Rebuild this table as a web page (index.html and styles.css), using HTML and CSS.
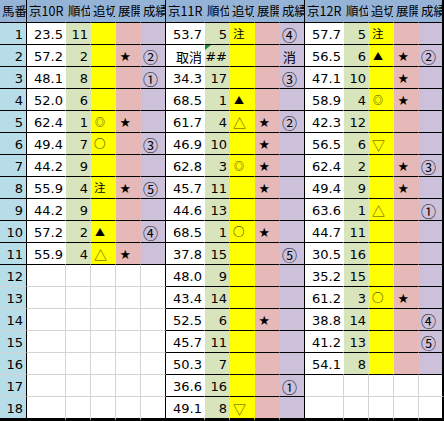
FILE: index.html
```html
<!DOCTYPE html>
<html lang="ja">
<head>
<meta charset="utf-8">
<title>出走表</title>
<link rel="stylesheet" href="styles.css">
</head>
<body>
<div class="sheet">
  <div class="row head">
    <div class="hn">馬番</div>
    <div>京10R</div><div>順位</div><div>追切</div><div>展開</div><div class="g">成績</div>
    <div>京11R</div><div>順位</div><div>追切</div><div>展開</div><div class="g">成績</div>
    <div>京12R</div><div>順位</div><div>追切</div><div>展開</div><div class="g">成績</div>
  </div>
  <div class="row">
    <div class="no">1</div>
    <div class="t">23.5</div><div class="r">11</div><div class="k"></div><div class="e"></div><div class="s"></div>
    <div class="t">53.7</div><div class="r">5</div><div class="k">注</div><div class="e"></div><div class="s">④</div>
    <div class="t">57.7</div><div class="r">5</div><div class="k">注</div><div class="e"></div><div class="s"></div>
  </div>
  <div class="row">
    <div class="no">2</div>
    <div class="t">57.2</div><div class="r">2</div><div class="k"></div><div class="e">★</div><div class="s">②</div>
    <div class="t cjk">取消</div><div class="r err">##</div><div class="k"></div><div class="e"></div><div class="s kesi">消</div>
    <div class="t">56.5</div><div class="r">6</div><div class="k"><span class="tri">▲</span></div><div class="e">★</div><div class="s">②</div>
  </div>
  <div class="row">
    <div class="no">3</div>
    <div class="t">48.1</div><div class="r">8</div><div class="k"></div><div class="e"></div><div class="s">①</div>
    <div class="t">34.3</div><div class="r">17</div><div class="k"></div><div class="e"></div><div class="s">③</div>
    <div class="t">47.1</div><div class="r">10</div><div class="k"></div><div class="e">★</div><div class="s"></div>
  </div>
  <div class="row">
    <div class="no">4</div>
    <div class="t">52.0</div><div class="r">6</div><div class="k"></div><div class="e"></div><div class="s"></div>
    <div class="t">68.5</div><div class="r">1</div><div class="k"><span class="tri">▲</span></div><div class="e"></div><div class="s"></div>
    <div class="t">58.9</div><div class="r">4</div><div class="k"><span class="dc">◎</span></div><div class="e">★</div><div class="s"></div>
  </div>
  <div class="row">
    <div class="no">5</div>
    <div class="t">62.4</div><div class="r">1</div><div class="k"><span class="dc">◎</span></div><div class="e">★</div><div class="s"></div>
    <div class="t">61.7</div><div class="r">4</div><div class="k"><span class="ol">△</span></div><div class="e">★</div><div class="s">②</div>
    <div class="t">42.3</div><div class="r">12</div><div class="k"></div><div class="e"></div><div class="s"></div>
  </div>
  <div class="row">
    <div class="no">6</div>
    <div class="t">49.4</div><div class="r">7</div><div class="k">○</div><div class="e"></div><div class="s">③</div>
    <div class="t">46.9</div><div class="r">10</div><div class="k"></div><div class="e">★</div><div class="s"></div>
    <div class="t">56.5</div><div class="r">6</div><div class="k"><span class="ol">▽</span></div><div class="e"></div><div class="s"></div>
  </div>
  <div class="row">
    <div class="no">7</div>
    <div class="t">44.2</div><div class="r">9</div><div class="k"></div><div class="e"></div><div class="s"></div>
    <div class="t">62.8</div><div class="r">3</div><div class="k"><span class="dc">◎</span></div><div class="e">★</div><div class="s"></div>
    <div class="t">62.4</div><div class="r">2</div><div class="k"></div><div class="e">★</div><div class="s">③</div>
  </div>
  <div class="row">
    <div class="no">8</div>
    <div class="t">55.9</div><div class="r">4</div><div class="k">注</div><div class="e">★</div><div class="s">⑤</div>
    <div class="t">45.7</div><div class="r">11</div><div class="k"></div><div class="e">★</div><div class="s"></div>
    <div class="t">49.4</div><div class="r">9</div><div class="k"></div><div class="e">★</div><div class="s"></div>
  </div>
  <div class="row">
    <div class="no">9</div>
    <div class="t">44.2</div><div class="r">9</div><div class="k"></div><div class="e"></div><div class="s"></div>
    <div class="t">44.6</div><div class="r">13</div><div class="k"></div><div class="e"></div><div class="s"></div>
    <div class="t">63.6</div><div class="r">1</div><div class="k"><span class="ol">△</span></div><div class="e"></div><div class="s">①</div>
  </div>
  <div class="row">
    <div class="no">10</div>
    <div class="t">57.2</div><div class="r">2</div><div class="k"><span class="tri">▲</span></div><div class="e"></div><div class="s">④</div>
    <div class="t">68.5</div><div class="r">1</div><div class="k">○</div><div class="e">★</div><div class="s"></div>
    <div class="t">44.7</div><div class="r">11</div><div class="k"></div><div class="e"></div><div class="s"></div>
  </div>
  <div class="row">
    <div class="no">11</div>
    <div class="t">55.9</div><div class="r">4</div><div class="k"><span class="ol">△</span></div><div class="e">★</div><div class="s"></div>
    <div class="t">37.8</div><div class="r">15</div><div class="k"></div><div class="e"></div><div class="s">⑤</div>
    <div class="t">30.5</div><div class="r">16</div><div class="k"></div><div class="e"></div><div class="s"></div>
  </div>
  <div class="row">
    <div class="no lo">12</div>
    <div class="x"></div><div class="x"></div><div class="x"></div><div class="x"></div><div class="x g"></div>
    <div class="t">48.0</div><div class="r">9</div><div class="k"></div><div class="e"></div><div class="s"></div>
    <div class="t">35.2</div><div class="r">15</div><div class="k"></div><div class="e"></div><div class="s"></div>
  </div>
  <div class="row">
    <div class="no lo">13</div>
    <div class="x"></div><div class="x"></div><div class="x"></div><div class="x"></div><div class="x g"></div>
    <div class="t">43.4</div><div class="r">14</div><div class="k"></div><div class="e"></div><div class="s"></div>
    <div class="t">61.2</div><div class="r">3</div><div class="k">○</div><div class="e">★</div><div class="s"></div>
  </div>
  <div class="row">
    <div class="no lo">14</div>
    <div class="x"></div><div class="x"></div><div class="x"></div><div class="x"></div><div class="x g"></div>
    <div class="t">52.5</div><div class="r">6</div><div class="k"></div><div class="e">★</div><div class="s"></div>
    <div class="t">38.8</div><div class="r">14</div><div class="k"></div><div class="e"></div><div class="s">④</div>
  </div>
  <div class="row">
    <div class="no lo">15</div>
    <div class="x"></div><div class="x"></div><div class="x"></div><div class="x"></div><div class="x g"></div>
    <div class="t">45.7</div><div class="r">11</div><div class="k"></div><div class="e"></div><div class="s"></div>
    <div class="t">41.2</div><div class="r">13</div><div class="k"></div><div class="e"></div><div class="s">⑤</div>
  </div>
  <div class="row">
    <div class="no lo">16</div>
    <div class="x"></div><div class="x"></div><div class="x"></div><div class="x"></div><div class="x g"></div>
    <div class="t">50.3</div><div class="r">7</div><div class="k"></div><div class="e"></div><div class="s"></div>
    <div class="t">54.1</div><div class="r">8</div><div class="k"></div><div class="e"></div><div class="s"></div>
  </div>
  <div class="row">
    <div class="no lo">17</div>
    <div class="x"></div><div class="x"></div><div class="x"></div><div class="x"></div><div class="x g"></div>
    <div class="t">36.6</div><div class="r">16</div><div class="k"></div><div class="e"></div><div class="s">①</div>
    <div class="x"></div><div class="x"></div><div class="x"></div><div class="x"></div><div class="x g"></div>
  </div>
  <div class="row last">
    <div class="no lo">18</div>
    <div class="x"></div><div class="x"></div><div class="x"></div><div class="x"></div><div class="x g"></div>
    <div class="t">49.1</div><div class="r">8</div><div class="k"><span class="ol">▽</span></div><div class="e"></div><div class="s"></div>
    <div class="x"></div><div class="x"></div><div class="x"></div><div class="x"></div><div class="x g"></div>
  </div>
</div>
</body>
</html>
```

FILE: styles.css
```css
* {
  box-sizing: border-box;
}

body {
  margin: 0;
  background: #ffffff;
  color: #000000;
  font-family: "DejaVu Sans", "Noto Sans CJK JP", sans-serif;
  font-size: 13px;
}

.sheet {
  width: 444px;
}

.row {
  display: grid;
  grid-template-columns: 27px repeat(3, 39px 25px 25px 25px 25px);
  height: 22px;
}

.row > div {
  display: flex;
  align-items: center;
  overflow: hidden;
  white-space: nowrap;
  line-height: 1;
  padding-top: 1px;
  border-right: 1px solid transparent;
  border-bottom: 1px solid #000000;
}

.row > div:last-child {
  border-right: 2px solid #000000;
}

.head {
  height: 23px;
}

.head > div {
  background: #95b3d7;
  font-family: "Noto Sans CJK JP", sans-serif;
  font-size: 12.5px;
  padding-left: 2px;
}

.head > .hn,
.head > .g {
  border-right-color: #000000;
}

.no {
  background: #b7dee8;
  justify-content: flex-end;
  padding-right: 3px;
  border-right-color: #000000 !important;
}

.no.lo {
  border-bottom-color: #d4d4d4 !important;
}

.t {
  background: #ffffff;
  justify-content: flex-end;
  padding-right: 2px;
}

.t.cjk {
  font-family: "Noto Sans CJK JP", sans-serif;
  font-size: 13px;
}

.r {
  background: #d8e4bc;
  justify-content: flex-end;
  padding-right: 2px;
  position: relative;
}

.k,
.e,
.s {
  font-family: "Noto Sans CJK JP", sans-serif;
}

.k {
  background: #ffff00;
  font-size: 11.5px;
  padding-left: 3px;
}

.e {
  background: #e6b8b7;
  font-size: 10.5px;
  padding-left: 4px;
}

.s {
  background: #ccc0da;
  font-size: 15px;
  padding-left: 2px;
  border-right-color: #000000 !important;
}

.s.kesi {
  font-size: 13px;
  padding-left: 3px;
}

.x {
  background: #ffffff;
  border-right-color: #d4d4d4 !important;
  border-bottom-color: #d4d4d4 !important;
}

.x.g {
  border-right-color: #000000 !important;
}

.tri {
  font-size: 10px;
  padding-left: 1px;
}

.dc {
  font-size: 10px;
  font-weight: bold;
  color: #5c5000;
  padding-left: 1px;
}

.ol {
  font-size: 13px;
  color: #4f4600;
}

.err::before {
  content: "";
  position: absolute;
  top: 0;
  left: 0;
  border-top: 5px solid #1f8f3a;
  border-right: 6px solid transparent;
}

.last {
  height: 24px;
}

.row.last > div {
  border-bottom: 3px solid #000000 !important;
}
```
